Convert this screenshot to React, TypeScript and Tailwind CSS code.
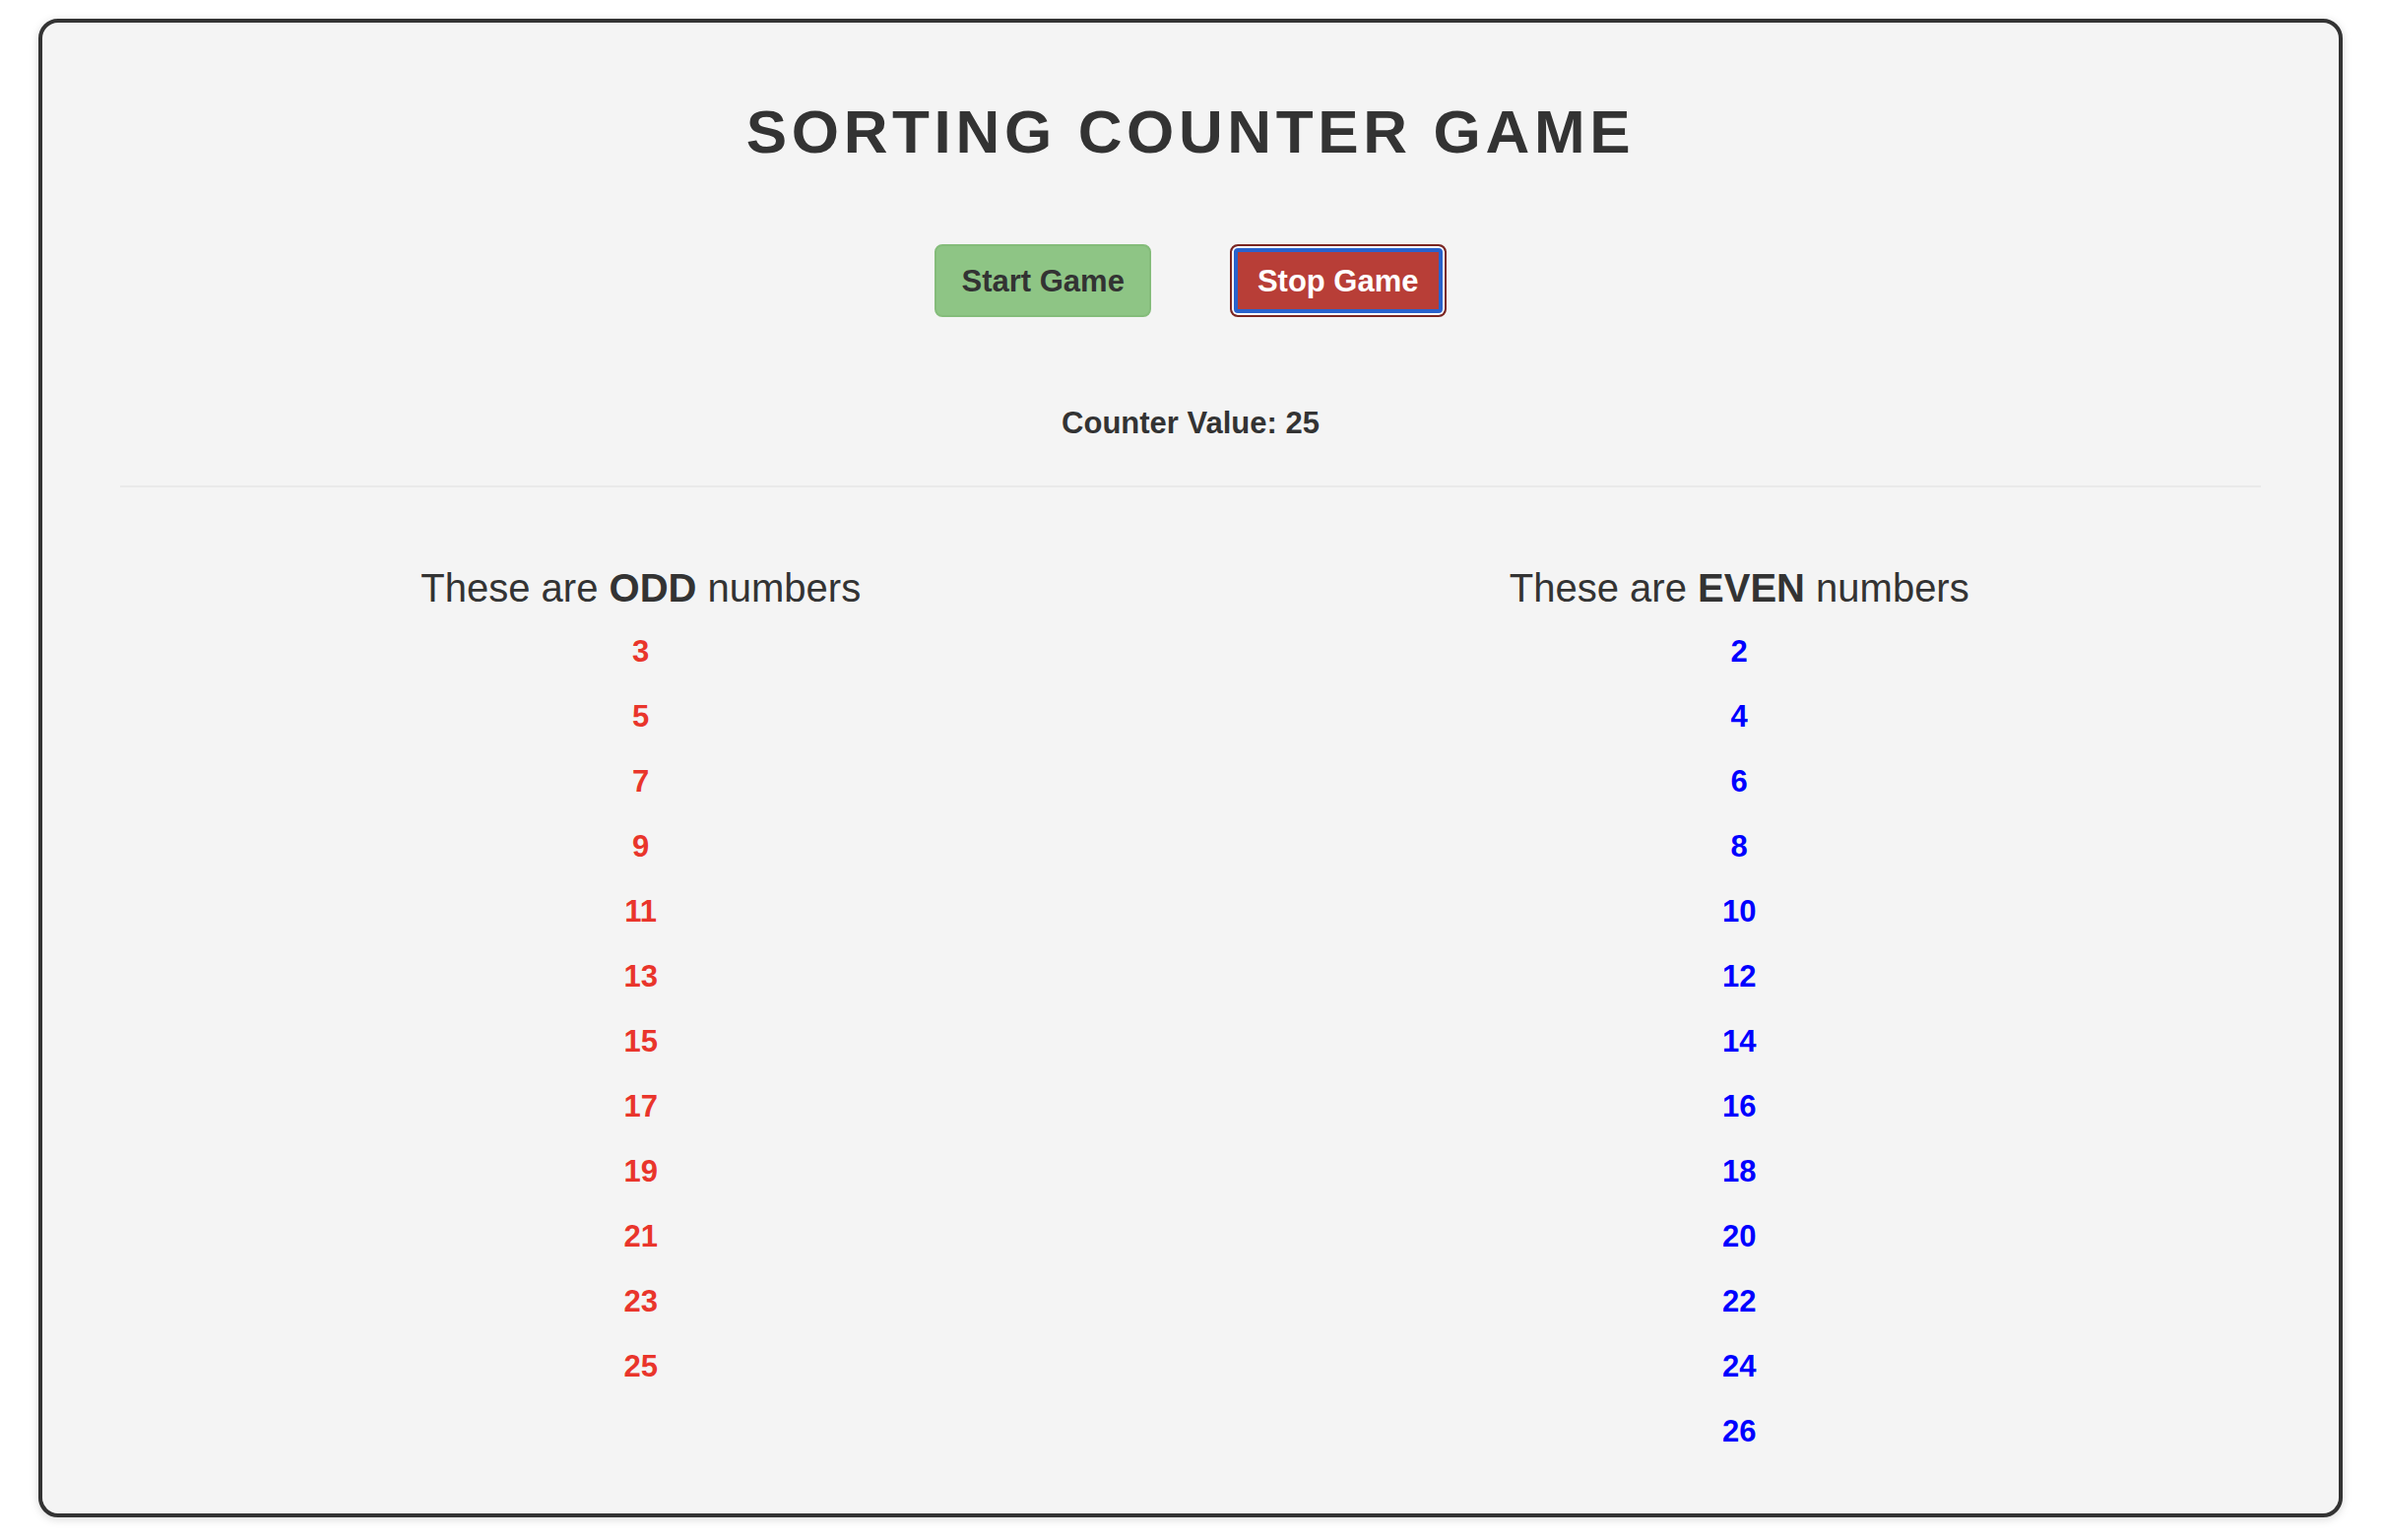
const ODD = [3, 5, 7, 9, 11, 13, 15, 17, 19, 21, 23, 25];
const EVEN = [2, 4, 6, 8, 10, 12, 14, 16, 18, 20, 22, 24, 26];

function NumberColumn({
  label,
  numbers,
  color,
}: {
  label: string;
  numbers: number[];
  color: "odd" | "even";
}) {
  return (
    <div className="flex flex-col items-center">
      <h2 className="mb-[12px] text-[40px] leading-none font-normal text-[#333]">
        These are <span className="font-bold">{label}</span> numbers
      </h2>
      <ul>
        {numbers.map((n) => (
          <li
            key={n}
            className={
              color === "odd"
                ? "h-[66px] text-center text-[31px] leading-[66px] font-bold text-[#e9352b]"
                : "h-[66px] text-center text-[31px] leading-[66px] font-bold text-[#0000ff]"
            }
          >
            {n}
          </li>
        ))}
      </ul>
    </div>
  );
}

export default function App() {
  const counter = 25;

  return (
    <div className="min-h-screen bg-white pt-[19px] pr-[43px] pb-[20px] pl-[39px] font-['Liberation_Sans',Arial,sans-serif]">
      <div className="rounded-[20px] border-4 border-[#333] bg-[#f4f4f4] pt-[80px] pb-[50px] shadow-[0_2px_10px_rgba(0,0,0,0.15)]">
        {/* Title */}
        <h1 className="text-center text-[62px] leading-none font-bold tracking-[4.65px] text-[#333]">
          SORTING COUNTER GAME
        </h1>

        {/* Controls */}
        <div className="mt-[83px] flex justify-center gap-[80px]">
          <button
            type="button"
            className="h-[74px] rounded-[8px] border-2 border-[#84bc7a] bg-[#8ec585] px-[25px] text-[31px] leading-none font-bold text-[#333]"
          >
            Start Game
          </button>
          <button
            type="button"
            className="h-[74px] rounded-[8px] border-2 border-[#7b2520] bg-[#b83e37] px-[26px] text-[31px] leading-none font-bold text-white shadow-[inset_0_0_0_2px_#ffffff,inset_0_0_0_6px_#2962cc]"
          >
            Stop Game
          </button>
        </div>

        <p className="mt-[92px] text-center text-[31px] leading-none font-bold text-[#333]">
          Counter Value: {counter}
        </p>

        <hr className="mx-[79px] mt-[48px] h-[2px] border-0 bg-[#e9e9e9]" />

        {/* Sorted lists */}
        <div className="mt-[82px] grid grid-cols-2 pr-[51px] pl-[50px]">
          <NumberColumn label="ODD" numbers={ODD} color="odd" />
          <NumberColumn label="EVEN" numbers={EVEN} color="even" />
        </div>
      </div>
    </div>
  );
}
